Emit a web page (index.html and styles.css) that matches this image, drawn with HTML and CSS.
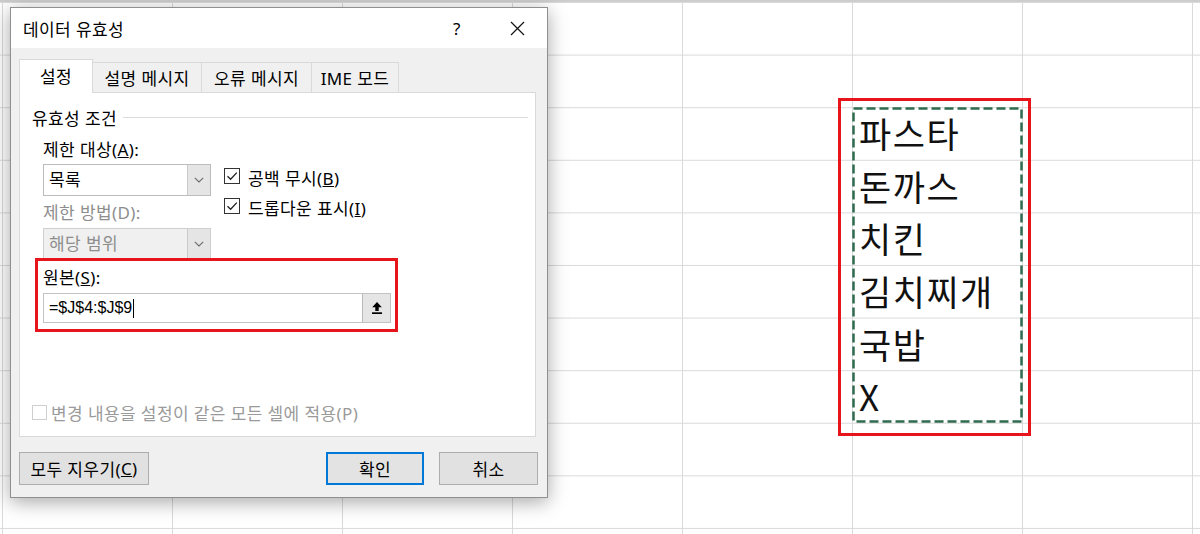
FILE: index.html
```html
<!DOCTYPE html>
<html lang="ko">
<head>
<meta charset="utf-8">
<title>데이터 유효성</title>
<link rel="stylesheet" href="styles.css">
</head>
<body>
<div class="sheet">
  <div class="range">
    <div class="item">파스타</div>
    <div class="item">돈까스</div>
    <div class="item">치킨</div>
    <div class="item">김치찌개</div>
    <div class="item">국밥</div>
    <div class="item">X</div>
    <svg class="marquee" width="171" height="316" viewBox="0 0 171 316"><rect x="1.5" y="1.5" width="168" height="313" fill="none" stroke="#2f6b4f" stroke-width="2.5" stroke-dasharray="9 4"/></svg>
  </div>
</div>

<div class="dialog">
  <div class="titlebar">
    <div class="title">데이터 유효성</div>
    <div class="tb-btn help">?</div>
    <div class="tb-btn close"><svg width="15" height="15" viewBox="0 0 15 15"><path d="M1 1 L14 14 M14 1 L1 14" stroke="#111" stroke-width="1.2" fill="none"/></svg></div>
  </div>
  <div class="body">
    <div class="tabs">
      <div class="tab active w1">설정</div>
      <div class="tab w2">설명 메시지</div>
      <div class="tab w3">오류 메시지</div>
      <div class="tab w4">IME 모드</div>
    </div>
    <div class="panel">
      <div class="group-head">유효성 조건</div>
      <div class="fields">
        <div class="row-top">
          <div class="col-left">
            <div class="lbl">제한 대상(<u>A</u>):</div>
            <div class="combo">
              <div class="val">목록</div>
              <div class="arrow"><svg width="10" height="6" viewBox="0 0 10 6"><path d="M0.8 0.8 L5 5 L9.2 0.8" fill="none" stroke="#6b6b6b" stroke-width="1.1"/></svg></div>
            </div>
            <div class="lbl dis">제한 방법(D):</div>
            <div class="combo dis">
              <div class="val">해당 범위</div>
              <div class="arrow"><svg width="10" height="6" viewBox="0 0 10 6"><path d="M0.8 0.8 L5 5 L9.2 0.8" fill="none" stroke="#6b6b6b" stroke-width="1.1"/></svg></div>
            </div>
          </div>
          <div class="col-right">
            <div class="chk-row">
              <span class="box"><svg width="14" height="14" viewBox="0 0 14 14"><path d="M2.5 7.2 L5.6 10.3 L11.8 3.6" fill="none" stroke="#222" stroke-width="1.3"/></svg></span>
              <span>공백 무시(<u>B</u>)</span>
            </div>
            <div class="chk-row">
              <span class="box"><svg width="14" height="14" viewBox="0 0 14 14"><path d="M2.5 7.2 L5.6 10.3 L11.8 3.6" fill="none" stroke="#222" stroke-width="1.3"/></svg></span>
              <span>드롭다운 표시(<u>I</u>)</span>
            </div>
          </div>
        </div>
        <div class="source">
          <div class="lbl">원본(<u>S</u>):</div>
          <div class="input">
            <div class="txt">=$J$4:$J$9<span class="caret"></span></div>
            <div class="pick"><svg width="12" height="14" viewBox="0 0 12 14"><path d="M6 1 L1.2 6.2 H4.3 V10 H7.7 V6.2 H10.8 Z" fill="#000"/><rect x="1" y="11.3" width="10" height="1.7" fill="#000"/></svg></div>
          </div>
        </div>
      </div>
      <div class="apply">
        <span class="box dis"></span>
        <span>변경 내용을 설정이 같은 모든 셀에 적용(P)</span>
      </div>
    </div>
    <div class="buttons">
      <div class="btn clear">모두 지우기(<u>C</u>)</div>
      <div class="btn ok">확인</div>
      <div class="btn cancel">취소</div>
    </div>
  </div>
</div>
</body>
</html>
```

FILE: styles.css
```css
* { box-sizing: border-box; }
html, body { margin: 0; padding: 0; }
body {
  width: 1200px;
  height: 534px;
  overflow: hidden;
  position: relative;
  background: #fff;
  font-family: "Noto Sans", "Noto Sans CJK KR", sans-serif;
}

/* spreadsheet */
.sheet {
  display: grid;
  grid-template-columns: repeat(7, 170px);
  grid-template-rows: repeat(10, 52.6px);
  padding-left: 2px;
  height: 534px;
  border-top: 2px solid #cdcdcd;
  background-image:
    linear-gradient(to right, #dadada 1px, transparent 1px),
    linear-gradient(to bottom, #dadada 1px, transparent 1px);
  background-size: 170px 52.6px;
  background-position: 2px 0;
}
.range {
  grid-column: 6;
  grid-row: 3 / span 6;
  position: relative;
  display: flex;
  flex-direction: column;
}
.range::after {
  content: "";
  position: absolute;
  left: -14px;
  top: -9px;
  right: -9px;
  bottom: -13px;
  border: 3px solid #e8141b;
}
.item {
  height: 52.6px;
  line-height: 52.6px;
  padding-left: 7px;
  font-family: "Noto Sans CJK KR", sans-serif;
  font-size: 35px;
  letter-spacing: 1.5px;
  color: #111;
}
.marquee {
  position: absolute;
  left: 0;
  top: 0;
}

/* dialog */
.dialog {
  position: absolute;
  left: 10px;
  top: 7px;
  width: 538px;
  height: 491px;
  border: 1px solid #8f8f8f;
  background: #f0f0f0;
  box-shadow: 0 4px 18px rgba(0, 0, 0, 0.35);
  display: flex;
  flex-direction: column;
  font-size: 17px;
  letter-spacing: 0.4px;
  color: #000;
}
.titlebar {
  height: 40px;
  background: #fff;
  display: flex;
  align-items: center;
  padding-left: 12px;
}
.title { flex: 1; }
.tb-btn {
  width: 60px;
  height: 40px;
  display: flex;
  align-items: center;
  justify-content: center;
}
.help { font-size: 17px; }
.body {
  flex: 1;
  padding: 11px 9px 12px 8px;
  display: flex;
  flex-direction: column;
}
.tabs {
  display: flex;
  align-items: flex-end;
  height: 34px;
  margin-bottom: -1px;
  position: relative;
  z-index: 1;
}
.tab {
  height: 31px;
  border: 1px solid #d9d9d9;
  background: #f0f0f0;
  display: flex;
  align-items: center;
  justify-content: center;
  margin-left: -1px;
  padding-bottom: 1px;
}
.tab.active {
  height: 34px;
  background: #fff;
  border-bottom: none;
  margin-left: 0;
  padding-bottom: 2px;
}
.w1 { width: 74px; }
.w2 { width: 110px; }
.w3 { width: 111px; }
.w4 { width: 88px; }

.panel {
  height: 345px;
  margin-right: 2px;
  border: 1px solid #d9d9d9;
  background: #fff;
}
.group-head {
  margin: 14px 7px 0 12px;
  height: 20px;
  display: flex;
  align-items: center;
  gap: 6px;
}
.group-head::after {
  content: "";
  flex: 1;
  height: 1px;
  background: #dcdcdc;
}
.fields { padding-left: 23px; }
.row-top {
  display: flex;
  margin-top: 13px;
}
.col-left { width: 168px; }
.lbl {
  height: 20px;
  line-height: 20px;
}
.lbl.dis {
  margin-top: 7px;
  color: #8d8d8d;
}
.combo {
  margin-top: 4px;
  height: 32px;
  border: 1px solid #bcbcbc;
  background: #fff;
  display: flex;
}
.combo .val {
  flex: 1;
  padding-left: 5px;
  line-height: 29px;
}
.combo .arrow {
  width: 23px;
  background: #e5e5e5;
  border-left: 1px solid #cacaca;
  display: flex;
  align-items: center;
  justify-content: center;
}
.combo.dis {
  margin-top: 5px;
  height: 31px;
  background: #f0f0f0;
  border-color: #cfcfcf;
  color: #8d8d8d;
}
.col-right {
  margin-left: 13px;
  padding-top: 27px;
}
.chk-row {
  display: flex;
  align-items: center;
  gap: 8px;
  height: 20px;
}
.chk-row + .chk-row { margin-top: 10px; }
.box {
  width: 16px;
  height: 16px;
  border: 1px solid #333;
  background: #fff;
  display: flex;
  align-items: center;
  justify-content: center;
  margin-top: -2px;
}

.source {
  margin-left: -8px;
  margin-top: -1px;
  width: 363px;
  border: 3px solid #e8141b;
  padding: 7px 4px 6px 5px;
  position: relative;
}
.input {
  margin-top: 5px;
  height: 30px;
  border: 1px solid #c3c3c3;
  background: #fff;
  display: flex;
}
.input .txt {
  flex: 1;
  padding-left: 5px;
  line-height: 28px;
  font-family: "Liberation Sans", sans-serif;
  font-size: 16px;
  letter-spacing: 0;
  display: flex;
  align-items: center;
}
.caret {
  display: inline-block;
  width: 1px;
  height: 19px;
  background: #000;
  margin-left: 1px;
}
.input .pick {
  width: 28px;
  background: #e5e5e5;
  border-left: 1px solid #b9b9b9;
  display: flex;
  align-items: center;
  justify-content: center;
}

.apply {
  margin: 70px 0 0 12px;
  height: 20px;
  display: flex;
  align-items: center;
  gap: 4px;
  color: #9a9a9a;
}
.box.dis {
  width: 15px;
  height: 15px;
  border-color: #cfcfcf;
  margin-top: 0;
}

.buttons {
  margin-top: 15px;
  display: flex;
  height: 33px;
}
.btn {
  height: 33px;
  background: #e1e1e1;
  border: 1px solid #adadad;
  display: flex;
  align-items: center;
  justify-content: center;
}
.clear { width: 130px; }
.ok {
  width: 98px;
  margin-left: auto;
  border: 2px solid #0078d7;
  background: #e3e3e3;
}
.cancel {
  width: 99px;
  margin-left: 15px;
}
```
